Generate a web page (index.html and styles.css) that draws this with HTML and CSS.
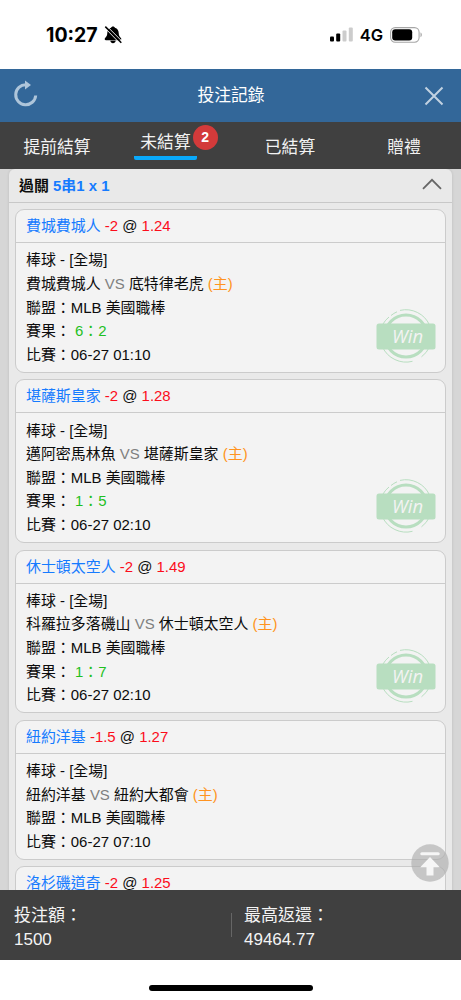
FILE: index.html
```html
<!DOCTYPE html>
<html lang="zh-Hant">
<head>
<meta charset="utf-8">
<meta name="viewport" content="width=device-width, initial-scale=1">
<title>投注記錄</title>
<link rel="stylesheet" href="styles.css">
</head>

<body>

<svg class="defs" width="0" height="0">
	<symbol id="win" viewBox="0 0 60 54">
		<g fill="none" stroke="#b8dec0">
			<circle cx="30" cy="27" r="21" stroke-width="3"/>
			<path stroke-width="1" d="M24 1.4A26 26 0 0 1 53.5 16M7 15A26 26 0 0 1 13 8M15 6.5A26 26 0 0 1 21 2.8M6.5 38A26 26 0 0 0 36.5 52.3M45.5 47.8A26 26 0 0 0 53.5 38"/>
		</g>
		<rect x="0.5" y="14.5" width="59" height="26" rx="2.5" fill="#b8dec0"/>
		<text x="31.5" y="33.8" text-anchor="middle" class="win-text">Win</text>
	</symbol>
</svg>

<div class="status">
	<span class="time">10:27</span>
	<svg class="mute" width="18" height="18" viewBox="0 0 18 18">
		<path d="M9 .4C10 .4 10.800 1 10.900 1.800 13.500 2.600 14.600 4.600 14.700 7c.1 2.600.9 3.700 2.200 5 .8.8.4 2.200-.9 2.200H2c-1.300 0-1.700-1.400-.9-2.200C2.400 10.700 3.200 9.600 3.300 7 3.400 4.600 4.500 2.600 7.100 1.800 7.200 1 8 .4 9 .4zM6.300 14.800h5.400c-.2 1.600-1.300 2.500-2.700 2.500s-2.500-.9-2.700-2.500z"/>
		<path d="M.8 1.800L15.800 17.200M2.900.2L17.700 15" stroke="#fff" stroke-width="1"/>
		<path d="M1.300.6L17.300 16.700" stroke="#000" stroke-width="1.500"/>
	</svg>
	<svg class="signal" width="24" height="15" viewBox="0 0 24 15">
		<rect x="0" y="9.500" width="4" height="5" rx="1"/>
		<rect x="6.200" y="6.500" width="4" height="8" rx="1"/>
		<rect x="12.500" y="3.500" width="4" height="11" rx="1" fill="#ccc"/>
		<rect x="18.800" y="0.500" width="4" height="14" rx="1" fill="#ccc"/>
	</svg>
	<span class="net">4G</span>
	<svg class="battery" width="33" height="16" viewBox="0 0 33 16">
		<rect x="0.600" y="0.600" width="28.500" height="14.600" rx="4.600" fill="none" stroke="#a6a6a6" stroke-width="1.100"/>
		<rect x="2.200" y="2.300" width="20" height="11.200" rx="3"/>
		<path d="M30.500 5.600c1.800.7 1.800 4 0 4.700z" fill="#a6a6a6"/>
	</svg>
</div>

<div class="header">
	<svg class="reload" width="24" height="28" viewBox="0 0 24 28">
		<path d="M12 4.700A10 10 0 1 0 21.700 15.500" fill="none" stroke="#aec5da" stroke-width="3"/>
		<path d="M11 0.500L17 5 11 9.500z" fill="#aec5da"/>
	</svg>
	<h1>投注記錄</h1>
	<svg width="20" height="20" viewBox="0 0 20 20">
		<path d="M1.500 1.500L18.500 18.500M18.500 1.500L1.500 18.500" stroke="#c2d2e1" stroke-width="2"/>
	</svg>
</div>

<div class="tabs">
	<div class="tab">提前結算</div>
	<div class="tab active"><span class="label">未結算</span><span class="badge">2</span></div>
	<div class="tab">已結算</div>
	<div class="tab">贈禮</div>
</div>

<div class="content">
	<div class="panel">
		<div class="panel-title">
			<span>過關 <span class="blue">5串1 x 1</span></span>
			<svg width="20" height="12" viewBox="0 0 20 12">
				<path d="M1 10.800L10 1.800 19 10.800" fill="none" stroke="#666" stroke-width="1.800"/>
			</svg>
		</div>

		<div class="list">
			<div class="card">
				<div class="pick"><span class="blue">費城費城人</span> <span class="red">-2</span> @ <span class="red">1.24</span></div>
				<div class="info">
					<p>棒球 - [全場]</p>
					<p>費城費城人 <span class="vs">VS</span> 底特律老虎 <span class="home">(主)</span></p>
					<p>聯盟：MLB 美國職棒</p>
					<p>賽果： <span class="score">6：2</span></p>
					<p>比賽：06-27 01:10</p>
				</div>
				<svg class="stamp"><use href="#win"/></svg>
			</div>

			<div class="card">
				<div class="pick"><span class="blue">堪薩斯皇家</span> <span class="red">-2</span> @ <span class="red">1.28</span></div>
				<div class="info">
					<p>棒球 - [全場]</p>
					<p>邁阿密馬林魚 <span class="vs">VS</span> 堪薩斯皇家 <span class="home">(主)</span></p>
					<p>聯盟：MLB 美國職棒</p>
					<p>賽果： <span class="score">1：5</span></p>
					<p>比賽：06-27 02:10</p>
				</div>
				<svg class="stamp"><use href="#win"/></svg>
			</div>

			<div class="card">
				<div class="pick"><span class="blue">休士頓太空人</span> <span class="red">-2</span> @ <span class="red">1.49</span></div>
				<div class="info">
					<p>棒球 - [全場]</p>
					<p>科羅拉多落磯山 <span class="vs">VS</span> 休士頓太空人 <span class="home">(主)</span></p>
					<p>聯盟：MLB 美國職棒</p>
					<p>賽果： <span class="score">1：7</span></p>
					<p>比賽：06-27 02:10</p>
				</div>
				<svg class="stamp"><use href="#win"/></svg>
			</div>

			<div class="card">
				<div class="pick"><span class="blue">紐約洋基</span> <span class="red">-1.5</span> @ <span class="red">1.27</span></div>
				<div class="info">
					<p>棒球 - [全場]</p>
					<p>紐約洋基 <span class="vs">VS</span> 紐約大都會 <span class="home">(主)</span></p>
					<p>聯盟：MLB 美國職棒</p>
					<p>比賽：06-27 07:10</p>
				</div>
			</div>

			<div class="card">
				<div class="pick"><span class="blue">洛杉磯道奇</span> <span class="red">-2</span> @ <span class="red">1.25</span></div>
			</div>
		</div>
	</div>

	<svg class="to-top" width="38" height="38" viewBox="0 0 38 38">
		<circle cx="19" cy="19" r="18.700" fill="#aaa" fill-opacity=".62"/>
		<path d="M10.800 9.800H27.200" stroke="#f6f6f6" stroke-width="3" stroke-linecap="round"/>
		<path d="M19 13L28.800 23.200H22.500V31.500H15.500V23.200H9.200z" fill="#f6f6f6"/>
	</svg>
</div>

<div class="footer">
	<div class="total">投注額：<br>1500</div>
	<div class="line"></div>
	<div class="total">最高返還：<br>49464.77</div>
</div>

<div class="home-bar"></div>

</body>
</html>
```
FILE: styles.css
```css
* {
	box-sizing: border-box;
}

body {
	margin: 0;
	height: 1000px;
	display: flex;
	flex-direction: column;
	overflow: hidden;
	background: #fff;
	color: #0c0c0c;
	font-family: "Liberation Sans", "Noto Sans CJK TC", sans-serif;
	font-size: 14.95px;
}

h1, p {
	margin: 0;
}

svg {
	display: block;
	flex: none;
}

.defs {
	position: absolute;
}

.status {
	height: 69px;
	flex: none;
	display: flex;
	align-items: center;
	padding: 0 38px 0 46px;
	font-family: Inter, sans-serif;
	color: #000;
}

.time {
	width: 55px;
	font-size: 19.5px;
	font-weight: 700;
	white-space: nowrap;
}

.mute {
	margin-left: 3px;
}

.signal {
	margin-left: auto;
}

.net {
	margin: 0 7px 0 6px;
	font-size: 16.5px;
	font-weight: 600;
}

.header {
	height: 53px;
	flex: none;
	display: flex;
	align-items: center;
	justify-content: space-between;
	padding: 0 17px 0 14px;
	background: #336799;
	color: #fff;
}

.reload {
	margin-bottom: 4px;
}

.header h1 {
	padding-bottom: 3px;
	font-size: 16.8px;
	font-weight: 400;
}

.tabs {
	height: 47px;
	flex: none;
	display: flex;
	background: #404040;
	color: #f2f2f2;
	font-size: 16.8px;
}

.tab {
	flex: 1;
	display: flex;
	align-items: center;
	justify-content: center;
}

.tab.active {
	align-items: flex-start;
	padding: 3px 0 0 5px;
}

.tab .label {
	margin-top: 5px;
	padding: 0 6px;
	height: 30px;
	line-height: 26px;
	border-bottom: 4px solid #0aa9fb;
	border-radius: 2px;
}

.badge {
	width: 25px;
	height: 25px;
	margin-left: -4px;
	border-radius: 50%;
	background: #d33a3a;
	color: #fff;
	font-size: 14px;
	font-weight: 700;
	line-height: 25px;
	text-align: center;
}

.content {
	height: 721px;
	flex: none;
	position: relative;
	overflow: hidden;
	padding: 0 9px;
	background: #d6d6d6;
}

.panel {
	background: #e9e9e9;
	border-radius: 6px;
	box-shadow: 0 0 3px rgba(0, 0, 0, .12);
}

.panel-title {
	height: 34px;
	display: flex;
	align-items: center;
	justify-content: space-between;
	padding: 0 10px 3px;
	border-bottom: 1px solid #c8c8c8;
	font-weight: 700;
}

.list {
	display: flex;
	flex-direction: column;
	gap: 6.5px;
	padding: 6px;
}

.card {
	position: relative;
	border: 1px solid #cbcbcb;
	border-radius: 9px;
	background: #f3f3f3;
}

.pick {
	height: 33px;
	padding-left: 10px;
	line-height: 32px;
	border-bottom: 1px solid #cbcbcb;
}

.info {
	padding: 5.4px 10px;
	line-height: 23.6px;
}

.info p {
	height: 23.6px;
}

.blue {
	color: #167bff;
}

.red {
	color: #fc0d1b;
}

.vs {
	color: #808080;
}

.home {
	color: #ff9320;
}

.score {
	color: #1fc01f;
}

.stamp {
	position: absolute;
	right: 9px;
	bottom: 9px;
	width: 60px;
	height: 54px;
}

.win-text {
	fill: #f3f3f3;
	font: italic 500 18.5px "Open Sans", "Noto Sans", sans-serif;
}

.to-top {
	position: absolute;
	right: 12px;
	bottom: 8px;
}

.footer {
	height: 70px;
	flex: none;
	display: flex;
	align-items: center;
	background: #404040;
	color: #f4f4f4;
	font-size: 17px;
	line-height: 24px;
}

.total {
	padding-top: 6px;
}

.total:first-child {
	width: 231px;
	padding-left: 14px;
}

.line {
	width: 1px;
	height: 24px;
	margin-right: 12px;
	background: #666;
}

.home-bar {
	width: 164px;
	height: 6px;
	flex: none;
	margin: 24.5px auto 0;
	border-radius: 3px;
	background: #000;
}
```
